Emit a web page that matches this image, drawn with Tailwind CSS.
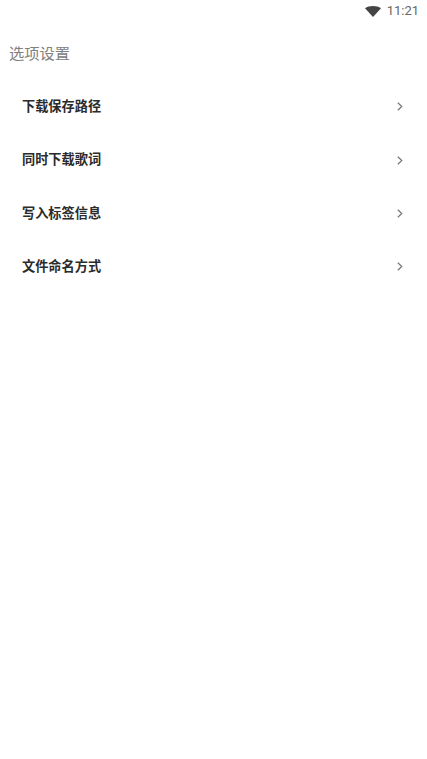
<!DOCTYPE html>
<html lang="zh-CN">
<head>
    <meta charset="UTF-8">
    <meta name="viewport" content="width=device-width, initial-scale=1.0">
    <title>选项设置</title>
    <script src="https://cdn.jsdelivr.net/npm/@tailwindcss/browser@4"></script>
</head>
<body class="h-[759px] w-[427px] overflow-hidden bg-white font-['Roboto','Noto_Sans_CJK_SC',sans-serif]">
    <!-- status bar -->
    <div class="flex h-[22px] items-center justify-end pr-2 text-[13px] text-[#666666]">
        <svg class="mr-[6px] h-[11px] w-[16px]" viewBox="0 0 16 11"><path d="M0 2.2C2 .7 5 0 8 0s6 .7 8 2.2L8 11z" fill="#444444"/></svg>
        <span>11:21</span>
    </div>

    <div class="h-[44px] pl-[9px] pt-[20px] text-[15.25px] leading-[24px] text-[#808080]">选项设置</div>

    <!-- option rows -->
    <div class="mt-[14px] flex flex-col pl-[22px] pr-[24px]">
        <div class="flex h-[53.4px] items-center justify-between">
            <span class="text-[13.2px] font-bold text-[#2b2b2b]">下载保存路径</span>
            <svg class="h-[9px] w-[6px]" viewBox="0 0 6 9" fill="none"><path d="M.8.7 4.8 4.5.8 8.3" stroke="#777777" stroke-width="1.2"/></svg>
        </div>
        <div class="flex h-[53.4px] items-center justify-between">
            <span class="text-[13.2px] font-bold text-[#2b2b2b]">同时下载歌词</span>
            <svg class="h-[9px] w-[6px]" viewBox="0 0 6 9" fill="none"><path d="M.8.7 4.8 4.5.8 8.3" stroke="#777777" stroke-width="1.2"/></svg>
        </div>
        <div class="flex h-[53.4px] items-center justify-between">
            <span class="text-[13.2px] font-bold text-[#2b2b2b]">写入标签信息</span>
            <svg class="h-[9px] w-[6px]" viewBox="0 0 6 9" fill="none"><path d="M.8.7 4.8 4.5.8 8.3" stroke="#777777" stroke-width="1.2"/></svg>
        </div>
        <div class="flex h-[53.4px] items-center justify-between">
            <span class="text-[13.2px] font-bold text-[#2b2b2b]">文件命名方式</span>
            <svg class="h-[9px] w-[6px]" viewBox="0 0 6 9" fill="none"><path d="M.8.7 4.8 4.5.8 8.3" stroke="#777777" stroke-width="1.2"/></svg>
        </div>
    </div>
</body>
</html>
